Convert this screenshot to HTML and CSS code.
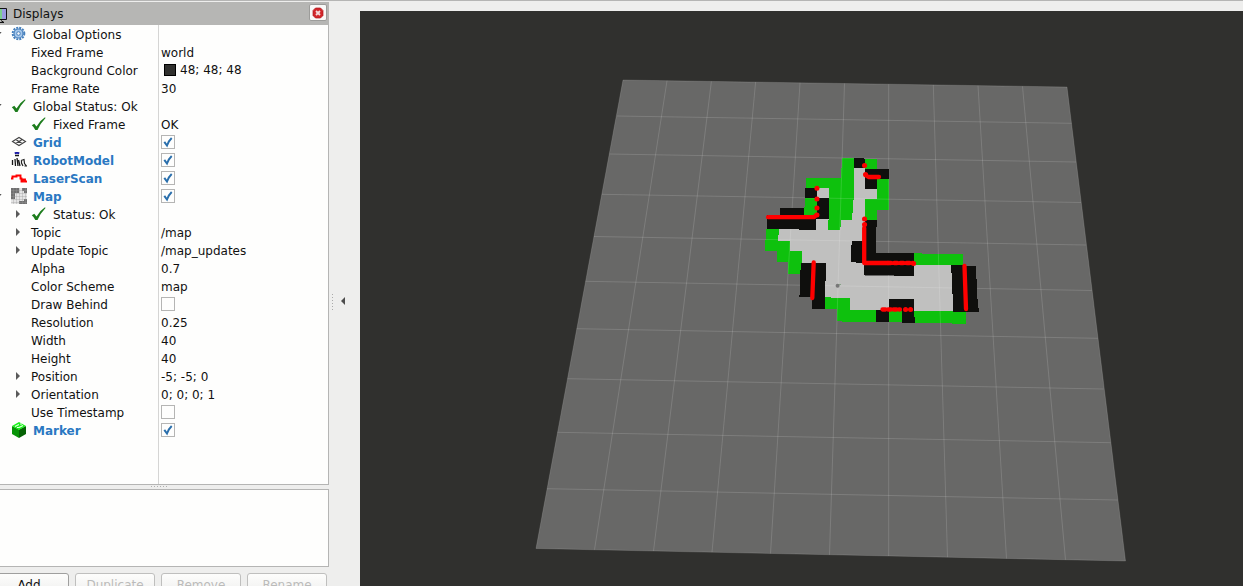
FILE: index.html
```html
<!DOCTYPE html>
<html lang="en">
<head>
<meta charset="utf-8">
<title>Displays</title>
<link rel="stylesheet" href="styles.css">
</head>
<body>
<svg class="defs" width="0" height="0">
  <symbol id="tick" viewBox="0 0 16 16"><path d="M.8 9.200 3.300 7.800 5.500 10.500Q9 4.500 14 1.300L14.500 2Q9.600 7 6.500 14L4.300 14Q3 11 .8 9.200Z" fill="#1c7c1c"/></symbol>
  <symbol id="open" viewBox="0 0 4 8"><path d="M0 2H1.600L0 4Z" fill="#555"/></symbol>
  <symbol id="closed" viewBox="0 0 4 8"><path d="M0 0 4 4 0 8Z" fill="#5a5a5a"/></symbol>
  <symbol id="check" viewBox="0 0 14 14"><path d="M3.300 6.800 6 10.500Q8 5.500 10.700 3" fill="none" stroke="#2a6fac" stroke-width="2"/></symbol>
</svg>
<div class="app">
  <div class="dock">
    <header class="title">
      <svg class="monitor" width="9" height="18" viewBox="0 0 9 18"><path d="M0 3.500H6.500V14.500H0" fill="#9a9ae0" stroke="#111"/><path d="M0 4H2V14H0Z" fill="#7ccf8e"/><path d="M0 17.500H4L1 15.500" fill="none" stroke="#111"/></svg>
      <span>Displays</span>
      <button class="close"><svg width="12" height="12" viewBox="0 0 12 12"><path d="M3.500 1h5l2.500 2.500v5l-2.500 2.500h-5l-2.500-2.500v-5Z" fill="#d2272b" stroke="#b0181c" stroke-width=".7"/><path d="M4 4 8 8M8 4 4 8" stroke="#f5dada" stroke-width="1.800"/></svg></button>
    </header>
    <div class="tree">
      <div class="row"><div class="name"><i class="tw"><svg><use href="#open"/></svg></i><svg class="icon" viewBox="0 0 16 16"><circle cx="7.500" cy="7.500" r="5.800" fill="none" stroke="#4680bd" stroke-width="2" stroke-dasharray="2 1.040"/><circle cx="7.500" cy="7.500" r="4.500" fill="#a6c7ea" stroke="#4680bd" stroke-width="1.200"/><circle cx="7.500" cy="7.500" r="1.800" fill="#f3f6fa" stroke="#4680bd"/></svg>Global Options</div><div class="value"></div></div>
      <div class="row"><div class="name sub"><i class="tw"></i>Fixed Frame</div><div class="value">world</div></div>
      <div class="row"><div class="name sub"><i class="tw"></i>Background Color</div><div class="value color"><i class="swatch"></i>48; 48; 48</div></div>
      <div class="row"><div class="name sub"><i class="tw"></i>Frame Rate</div><div class="value">30</div></div>
      <div class="row"><div class="name"><i class="tw"><svg><use href="#open"/></svg></i><svg class="icon"><use href="#tick"/></svg>Global Status: Ok</div><div class="value"></div></div>
      <div class="row"><div class="name sub"><i class="tw"></i><svg class="icon"><use href="#tick"/></svg>Fixed Frame</div><div class="value">OK</div></div>
      <div class="row"><div class="name display"><i class="tw"></i><svg class="icon" viewBox="0 0 16 16"><path d="M1.500 7.500 8 3.500 14.500 7.500 8 11.500ZM4.700 5.500 11.200 9.500M4.700 9.500 11.200 5.500" fill="none" stroke="#444" stroke-width="1.100"/></svg>Grid</div><div class="value"><i class="box"><svg><use href="#check"/></svg></i></div></div>
      <div class="row"><div class="name display"><i class="tw"></i><svg class="icon" viewBox="0 0 16 16"><path d="M3.800 1.500Q6 .2 8.200 1.500" fill="none" stroke="#1717a5" stroke-width="2"/><path d="M4 3.500h4M1.500 8v5M4 7l.5 7M6 6l1 8M7.500 8l1.500 6" fill="none" stroke="#181818" stroke-width="1.300"/><path d="M10.500 8v3l1.500 3M10 8.500l3-1 .5 4 2 2.500h-2" fill="none" stroke="#222" stroke-width="1.200"/></svg>RobotModel</div><div class="value"><i class="box"><svg><use href="#check"/></svg></i></div></div>
      <div class="row"><div class="name display"><i class="tw"></i><svg class="icon" viewBox="0 0 16 16"><path d="M0 8.500H1.500V6.500H5.500V5.500H9.500V8.500H10.500V11.500H12V9.500H14V11.500H16" fill="none" stroke="#f00" stroke-width="1.900"/></svg>LaserScan</div><div class="value"><i class="box"><svg><use href="#check"/></svg></i></div></div>
      <div class="row"><div class="name display"><i class="tw"><svg><use href="#open"/></svg></i><svg class="icon" viewBox="0 0 16 16"><path d="M0 0H16V16H0Z" fill="#e5e5e5"/><path d="M0 0H8V5H4V11H0ZM11 0H16V5H13V3H11ZM13 11H16V16H8V13H13Z" fill="#707070"/><path d="M2.500 0V16M5.500 0V16M8.500 0V16M11.500 0V16M14.500 0V16M0 2.500H16M0 5.500H16M0 8.500H16M0 11.500H16M0 14.500H16" stroke="#999" stroke-width=".35"/></svg>Map</div><div class="value"><i class="box"><svg><use href="#check"/></svg></i></div></div>
      <div class="row"><div class="name sub"><i class="tw"><svg><use href="#closed"/></svg></i><svg class="icon"><use href="#tick"/></svg>Status: Ok</div><div class="value"></div></div>
      <div class="row"><div class="name sub"><i class="tw"><svg><use href="#closed"/></svg></i>Topic</div><div class="value">/map</div></div>
      <div class="row"><div class="name sub"><i class="tw"><svg><use href="#closed"/></svg></i>Update Topic</div><div class="value">/map_updates</div></div>
      <div class="row"><div class="name sub"><i class="tw"></i>Alpha</div><div class="value">0.7</div></div>
      <div class="row"><div class="name sub"><i class="tw"></i>Color Scheme</div><div class="value">map</div></div>
      <div class="row"><div class="name sub"><i class="tw"></i>Draw Behind</div><div class="value"><i class="box"></i></div></div>
      <div class="row"><div class="name sub"><i class="tw"></i>Resolution</div><div class="value">0.25</div></div>
      <div class="row"><div class="name sub"><i class="tw"></i>Width</div><div class="value">40</div></div>
      <div class="row"><div class="name sub"><i class="tw"></i>Height</div><div class="value">40</div></div>
      <div class="row"><div class="name sub"><i class="tw"><svg><use href="#closed"/></svg></i>Position</div><div class="value">-5; -5; 0</div></div>
      <div class="row"><div class="name sub"><i class="tw"><svg><use href="#closed"/></svg></i>Orientation</div><div class="value">0; 0; 0; 1</div></div>
      <div class="row"><div class="name sub"><i class="tw"></i>Use Timestamp</div><div class="value"><i class="box"></i></div></div>
      <div class="row"><div class="name display"><i class="tw"></i><svg class="icon" viewBox="0 0 16 16"><path d="M1 4 8 7.500V16L1 12Z" fill="#079407"/><path d="M8 7.500 15 4V12L8 16Z" fill="#056205"/><path d="M1 4 8 0 15 4 8 8Z" fill="#19f019"/><path d="M4 4.500 8 2.500M8 5.500 12 3.500M6 5.500h2M9 2h2" stroke="#e4ffe4" stroke-width="1.200"/></svg>Marker</div><div class="value"><i class="box"><svg><use href="#check"/></svg></i></div></div>
      <div class="row fill"><div class="name"></div><div class="value"></div></div>
    </div>
    <div class="split-h"></div>
    <div class="help"></div>
    <div class="buttons">
      <button>Add</button><button disabled>Duplicate</button><button disabled>Remove</button><button disabled>Rename</button>
    </div>
  </div>
  <div class="split-v"><i class="dots"></i><svg width="5" height="8" viewBox="0 0 5 8"><path d="M5 0V8L1 4Z" fill="#4c4c4c"/></svg></div>
  <svg class="view" viewBox="360 11 883 575" width="883" height="575">
    <path d="M360 11H1243V586H360Z" fill="#30302e"/>
    <path d="M623 80 1067 87 1125.500 561 536 548.500Z" fill="#686867"/>
    <path class="free" d="M853 167H866V189H877V199.500H865V276H914V265H953V311H849.500V298H825V263H801V251H789.500V241H778V229H815V218H817V188H829V219H851Z"/>
    <g class="unknown">
      <path d="M842 158H854V178L853.500 200 852 220H841V225L840 230H828L829 210V188H805.700L806 178H841Z"/>
      <path d="M805 198H817V216H804Z"/>
      <path d="M766 229H779L778 241H790V251H802V262L801 274H788V262H776.500V251H765Z"/>
      <path d="M865 159H877V169H865ZM877 179H889V210H877V220H864.500V199H877Z"/>
      <path d="M914 253.300H922V254H963V265H914Z"/>
      <path d="M824.500 297H831V298H850V310H889V311H902V322H889V321.500H842V320.500H837V309H825Z"/>
      <path d="M914 311H953V312H966V324H952V323H914Z"/>
    </g>
    <path class="grid" d="M623 80 1067 87M617 116 1071.500 123.300M609.500 154 1076 162M602 194.300 1081 202.500M594 236.500 1086 245M585.500 281.300 1091.700 290.500M576.700 328.700 1097.600 338.300M567.500 378.700 1103.500 389M557.500 432.300 1110.500 442.700M547 488.700 1117.500 500M536 548.500 1125.500 561
      M623 80 536 548.500M667 80.700 594.500 549.700M711.400 81.400 653.500 551M755.600 82.100 712 552.200M800 82.800 770.500 553.500M844.500 83.500 829.500 554.800M888.700 84.200V556M933.300 84.900 947.500 557.200M978 85.600 1006.500 558.500M1022.500 86.300 1065.500 559.700M1067 87 1125.500 561"/>
    <g class="wall">
      <path d="M854 158H864V159H865V168H854Z"/>
      <path d="M865 169H889V179H877V189H865Z"/>
      <path d="M805 188H817V198H805Z"/>
      <path d="M817 198H829V219H816V229.700H799V229H767V215H780V208H804V216H817Z"/>
      <path d="M865 220H877V227H876V253H914V276H894V275H864V263H856V262H851V249L852 241H864V225Z"/>
      <path d="M801 263H826V281H825V309H812V297H799V295H800V278Z"/>
      <path d="M951 265H966V266H976V279H977V290L978 308H979V312H953V294H952V273H951Z"/>
      <path d="M889 299H914V311L915 323H902V311H889V322H876V310H889Z"/>
    </g>
    <g class="scan">
      <path d="M768 217.200H814L816.500 215"/>
      <path d="M864.200 228V263H888"/>
      <path d="M888 263H913" stroke-dasharray="3 3.200"/>
      <path d="M866 175.500 868.500 177H879"/>
      <path d="M813.700 262.500 812.300 298"/>
      <path d="M964.500 266 966 309"/>
      <path d="M882.500 309.500H900" stroke-dasharray="3 2.500"/>
      <path class="hit" d="M816.900 188.200h.1M816.900 199h.1M816.900 208h.1M816.900 215h.1M864.500 165.500h.1M865.500 174.500h.1M864.500 219h.1M864.500 224.500h.1M913.500 263.500h.1M905.500 309.500h.1M910.500 309.500h.1"/>
    </g>
    <circle cx="837.600" cy="285.700" r="2" fill="#777"/><path d="M839 284h2v1h-2Z" fill="#86a386"/>
  </svg>
</div>
</body>
</html>
```
FILE: styles.css
```css
* { box-sizing: border-box; }
body { margin: 0; width: 1243px; height: 586px; overflow: hidden; background: #eeeeed; font: 12px "DejaVu Sans", sans-serif; color: #111; }
.defs { display: block; }
.app { display: flex; height: 586px; border-top: 1px solid #b5b5b4; overflow: hidden; }
.dock { width: 329px; padding-top: 1px; flex: none; }
.title { height: 23px; background: #b6b6b4; display: flex; align-items: center; }
.title span { margin-left: 4px; margin-top: 1px; }
.close { margin-left: auto; margin-right: 2px; margin-top: -2px; width: 18px; height: 17px; padding: 0; border: 1px solid #9c9c9a; border-radius: 2px; background: #f9f9f8; display: flex; align-items: center; justify-content: center; }
.tree { height: 460px; display: flex; flex-direction: column; background: #fefefd; border-right: 1px solid #b5b5b4; border-bottom: 1px solid #b5b5b4; }
.row { height: 18px; display: flex; flex: none; line-height: 18px; white-space: nowrap; }
.row.fill { flex: 1; height: auto; }
.name { width: 159px; border-right: 1px solid #d5d5d4; display: flex; align-items: center; padding-top: 1px; }
.value { padding: 1px 0 0 2px; display: flex; align-items: center; }
.value.color { padding-top: 0; }
.tw { width: 11px; height: 18px; flex: none; display: flex; align-items: center; }
.tw svg { width: 4px; height: 8px; margin-top: -2px; }
.sub .tw { width: 31px; }
.sub .tw svg { margin-left: 16px; }
.icon { width: 16px; height: 16px; flex: none; margin: -2px 6px 0 0; }
.display { font-weight: bold; color: #2a78c2; }
.box { width: 14px; height: 14px; border: 1px solid #b5b5b4; background: #fefefd; display: block; margin-top: -2px; }
.box svg { display: block; width: 14px; height: 14px; margin: -1px; }
.swatch { width: 12px; height: 12px; background: #30302e; border: 1px solid #000; margin: 0 4px 0 3px; }
.split-h { height: 4px; width: 17px; margin-left: 151px; background: repeating-linear-gradient(90deg, #b0b0af 0 1px, transparent 1px 3px) 0 1px / 100% 1px no-repeat; }
.help { height: 78px; border: 1px solid #b5b5b4; border-left: 0; background: #fefefd; }
.buttons { display: flex; gap: 6px; padding-top: 6px; margin-left: -11px; }
.buttons button { width: 80px; height: 24px; padding: 0; flex: none; font: 12px "DejaVu Sans", sans-serif; color: #111; border: 1px solid #9f9f9e; border-radius: 3px; background: linear-gradient(#fdfdfc, #eeeeed); }
.buttons button:disabled { color: #bbbbba; border-color: #bfbfbe; }
.split-v { width: 31px; flex: none; display: flex; align-items: flex-start; padding: 293px 0 0 3px; gap: 7px; }
.dots { width: 1px; height: 17px; background: repeating-linear-gradient(#aaa 0 1px, transparent 1px 3px); }
.split-v svg { margin-top: 3px; }
.view { display: block; margin-top: 10px; flex: none; }
.free { fill: #c0c0bf; }
.unknown { fill: #0ec10d; shape-rendering: crispEdges; }
.wall { fill: #0f0f0d; shape-rendering: crispEdges; }
.grid { fill: none; stroke: #fff; stroke-opacity: .14; stroke-width: 1; }
.scan { fill: none; stroke: #f00; stroke-width: 4.300px; stroke-linecap: round; stroke-linejoin: round; }
.scan .hit { stroke-width: 5px; }
```
